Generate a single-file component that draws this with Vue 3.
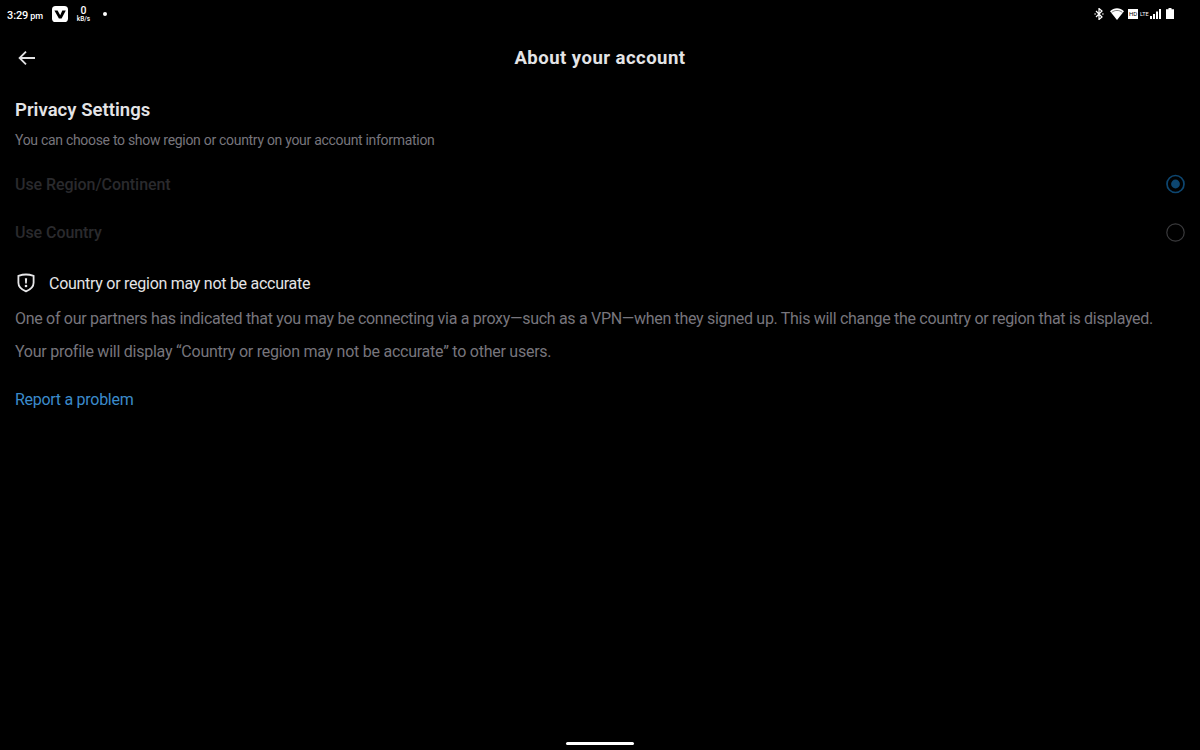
<script setup>
import { ref } from 'vue';

//選択中の表示設定
const selected = ref('region');

const options = [
  { id: 'region', label: 'Use Region/Continent' },
  { id: 'country', label: 'Use Country' },
];
</script>

<template>
  <div class="screen">

    <div class="statusbar">
      <div class="status-left">
        <span class="clock">3:29<small>pm</small></span>
        <svg class="app-icon" viewBox="0 0 16 16">
          <rect width="16" height="16" rx="3.6" fill="#fff" />
          <path d="M2.4 4.6h3.2l2.6 4.6 2.1-4.600h3.500L9.600 12.400H6.900z" fill="#000" />
        </svg>
        <span class="speed"><b>0</b><span>kB/s</span></span>
        <span class="dot"></span>
      </div>
      <div class="status-right">
        <svg class="bluetooth" viewBox="0 0 10 12">
          <path d="M2 3l6 6-3 2.5v-11L8 3 2 9" fill="none" stroke="#fff" stroke-width="1.2" />
          <circle cx="1.1" cy="6" r=".8" fill="#fff" />
          <circle cx="8.9" cy="6" r=".8" fill="#fff" />
        </svg>
        <svg class="wifi" viewBox="0 0 14 12">
          <path d="M0 3.2C4-.8 10-.8 14 3.2L7 12z" fill="#fff" />
          <path d="M1.6 4.4c3.2-2.6 7.6-2.6 10.8 0" fill="none" stroke="#000" stroke-width=".5" />
        </svg>
        <span class="hd">HD</span>
        <span class="lte">LTE</span>
        <svg class="signal" viewBox="0 0 11 10">
          <path d="M0 7h2v3H0zM3 5h2v5H3zM6 2.500h2V10H6zM9 0h2v10H9z" fill="#fff" />
        </svg>
        <svg class="battery" viewBox="0 0 8 12">
          <path d="M2.500 0h3v1.200H8V11H0V1.200h2.500z" fill="#fff" />
        </svg>
      </div>
    </div>

    <header>
      <svg class="back" viewBox="0 0 18 16">
        <path d="M8 1.6L1.6 8 8 14.4M1.6 8H17" fill="none" stroke="#e2e2e4" stroke-width="1.8" />
      </svg>
      <h1>About your account</h1>
    </header>

    <main>
      <h2>Privacy Settings</h2>
      <p class="hint">You can choose to show region or country on your account information</p>

      <div v-for="option in options" :key="option.id" class="option">
        <span>{{ option.label }}</span>
        <svg viewBox="0 0 20 20">
          <template v-if="selected === option.id">
            <circle cx="10.5" cy="10" r="8.5" fill="none" stroke="#0d4670" stroke-width="1.7" />
            <circle cx="10.5" cy="10" r="4.4" fill="#0d4670" />
          </template>
          <circle v-else cx="10.5" cy="10.5" r="8.7" fill="none" stroke="#3a3a3c" stroke-width="1.2" />
        </svg>
      </div>

      <div class="notice">
        <svg viewBox="0 0 18 20">
          <path d="M9 1.5c2.600 0 5 .5 7.600 1.300v7c0 4.300-3.300 6.900-7.600 8.600-4.300-1.700-7.600-4.300-7.600-8.600v-7C4 2 6.400 1.500 9 1.500z" fill="none" stroke="#e7e7e9" stroke-width="1.8" />
          <path d="M7.900 5.200h2.200l-.3 5.300H8.200z" fill="#e7e7e9" />
          <circle cx="9" cy="13" r="1.300" fill="#e7e7e9" />
        </svg>
        <span>Country or region may not be accurate</span>
      </div>
      <p class="detail partner">One of our partners has indicated that you may be connecting via a proxy—such as a VPN—when they signed up. This will change the country or region that is displayed.</p>
      <p class="detail profile">Your profile will display “Country or region may not be accurate” to other users.</p>
      <a class="report">Report a problem</a>
    </main>

    <div class="home-bar"></div>
  </div>
</template>

<style>
body {
  background: #000;
}
</style>

<style scoped>
.screen {
  display: flex;
  flex-direction: column;
  width: 1200px;
  height: 750px;
  overflow: hidden;
  background: #000;
  color: #e4e4e6;
  font-family: Roboto, "Liberation Sans", sans-serif;
  white-space: nowrap;
}

h1,
h2,
p {
  margin: 0;
}

/* ステータスバー */
.statusbar {
  display: flex;
  justify-content: space-between;
  height: 28px;
  padding: 0 26px 0 7px;
  color: #fff;
}

.status-left,
.status-right {
  display: flex;
  align-items: center;
}

.clock {
  width: 45px;
  padding-top: 2px;
  font-size: 11px;
  font-weight: 500;
  letter-spacing: -0.1px;
}

.clock small {
  margin-left: 2px;
  font-size: 9px;
}

.app-icon {
  width: 16px;
  height: 16px;
}

.speed {
  display: flex;
  flex-direction: column;
  align-items: center;
  width: 15px;
  margin-left: 8px;
  font-size: 6.5px;
  font-weight: 500;
  line-height: 7px;
}

.speed b {
  font-size: 10.5px;
  font-weight: 500;
  line-height: 10px;
}

.dot {
  width: 4px;
  height: 4px;
  margin-left: 12px;
  border-radius: 50%;
  background: #fff;
}

.bluetooth {
  width: 10px;
  height: 12px;
}

.wifi {
  width: 14px;
  height: 12px;
  margin-left: 6px;
}

.hd {
  width: 10px;
  height: 10px;
  margin-left: 4px;
  background: #fff;
  color: #000;
  font-size: 6px;
  line-height: 10px;
  text-align: center;
}

.lte {
  width: 10px;
  margin-left: 2px;
  font-size: 5.5px;
}

.signal {
  width: 11px;
  height: 10px;
}

.battery {
  width: 8px;
  height: 12px;
  margin-left: 5px;
}

/* ヘッダー */
header {
  display: grid;
  grid-template-columns: 18px 1fr 18px;
  align-items: center;
  height: 60px;
  padding: 0 18px;
}

.back {
  width: 18px;
  height: 16px;
}

h1 {
  font-size: 18.5px;
  font-weight: 700;
  line-height: 22px;
  letter-spacing: 0.48px;
  text-align: center;
}

main {
  flex: 1;
  padding: 10px 15px 0;
}

h2 {
  font-size: 18.5px;
  font-weight: 600;
  line-height: 24px;
  letter-spacing: 0.04px;
}

.hint {
  margin-top: 8px;
  color: #77757c;
  font-size: 14px;
  line-height: 20px;
  letter-spacing: -0.3px;
}

.option {
  display: flex;
  align-items: center;
  justify-content: space-between;
  height: 48px;
  color: #2a2a2d;
  font-size: 16px;
  font-weight: 500;
  letter-spacing: -0.06px;
}

.option span {
  padding-top: 1px;
}

.hint + .option {
  margin-top: 10px;
}

.option svg {
  width: 20px;
  height: 20px;
}

.notice {
  display: flex;
  align-items: center;
  gap: 14px;
  height: 24px;
  margin-top: 15px;
  padding-left: 2px;
  font-size: 16px;
  letter-spacing: -0.27px;
}

.notice svg {
  width: 18px;
  height: 20px;
}

.detail {
  color: #77757c;
  font-size: 16px;
  line-height: 24px;
  letter-spacing: -0.25px;
}

.partner {
  margin-top: 12px;
  letter-spacing: -0.302px;
}

.profile {
  margin-top: 9px;
}

.report {
  display: inline-block;
  margin-top: 24px;
  color: #3b8bcb;
  font-size: 16px;
  line-height: 24px;
  letter-spacing: -0.28px;
}

.home-bar {
  align-self: center;
  width: 68px;
  height: 3px;
  margin-bottom: 5px;
  border-radius: 2px;
  background: #fff;
}
</style>
